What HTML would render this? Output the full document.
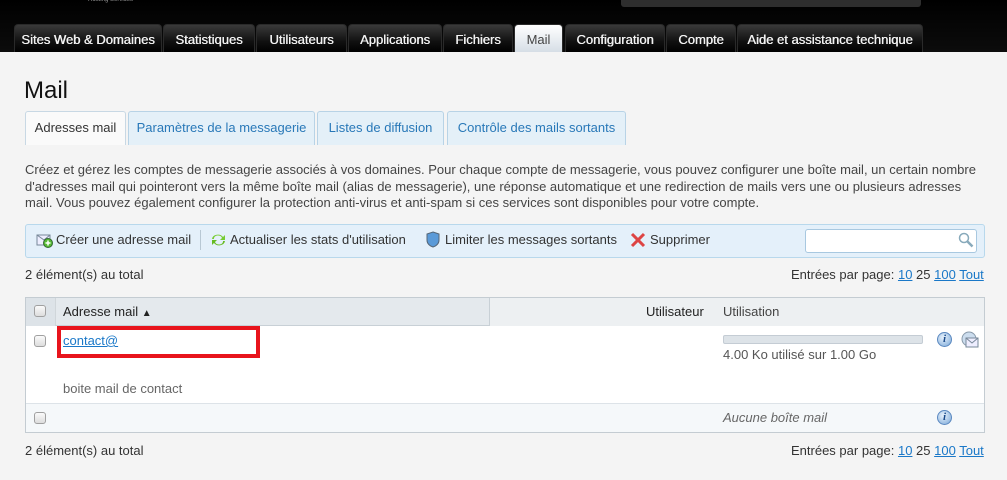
<!DOCTYPE html>
<html><head><meta charset="utf-8"><style>
*{margin:0;padding:0;box-sizing:border-box}
body{width:1007px;height:480px;background:#f4f4f4;font-family:"Liberation Sans",sans-serif;font-size:13px;color:#333;position:relative;overflow:hidden}
.a{position:absolute;white-space:nowrap}
#top{position:absolute;left:0;top:0;width:1007px;height:52px;background:linear-gradient(#000,#0c0c0c)}
.nt{position:absolute;top:24px;height:28px;background:linear-gradient(#3a3a3a,#111 60%,#000);border-radius:4px 4px 0 0;color:#f2f2f2;font-size:13px;font-weight:normal;text-shadow:0.4px 0 0 #f2f2f2;text-align:center;line-height:30px;border:1px solid #2a2a2a;border-bottom:none}
.nt.on{background:linear-gradient(#fff,#d6dee6);color:#444;text-shadow:none}
.st{position:absolute;top:111px;height:34px;background:#e4f0f8;border:1px solid #b8d3e6;border-bottom:none;border-radius:3px 3px 0 0;color:#2878b8;text-align:center;line-height:32px}
.st.on{background:#fafafa;color:#333;border-color:#c8d8e4}
a,.lk{color:#1a78c8;text-decoration:underline}
.cb{position:absolute;width:12px;height:12px;border:1px solid #a0a0a0;border-radius:3px;background:linear-gradient(#fafafa,#ddd)}
.info{position:absolute;width:15px;height:15px;border-radius:50%;background:radial-gradient(circle at 40% 35%,#e8f2fc,#7aa8d8);border:1px solid #5a88c0;color:#1a4a8a;font:italic bold 11px "Liberation Serif",serif;text-align:center;line-height:13px}
</style></head><body>
<div id="top"></div>
<div class="a" style="left:621px;top:0;width:300px;height:7px;background:#2e2e2e;border-radius:0 0 3px 3px"></div>
<div class="a" style="left:88px;top:-3px;font-size:6px;color:#999">Hosting Services</div>
<div class="nt" style="left:14px;width:148px">Sites Web &amp; Domaines</div>
<div class="nt" style="left:163px;width:92px">Statistiques</div>
<div class="nt" style="left:256px;width:91px">Utilisateurs</div>
<div class="nt" style="left:348px;width:94px">Applications</div>
<div class="nt" style="left:443px;width:70px">Fichiers</div>
<div class="nt on" style="left:514px;width:49px">Mail</div>
<div class="nt" style="left:565px;width:100px">Configuration</div>
<div class="nt" style="left:666px;width:70px">Compte</div>
<div class="nt" style="left:737px;width:186px">Aide et assistance technique</div>

<div class="a" style="left:24px;top:77px;font-size:24px;color:#111">Mail</div>
<div class="st on" style="left:25px;width:101px">Adresses mail</div>
<div class="st" style="left:128px;width:187px">Paramètres de la messagerie</div>
<div class="st" style="left:317px;width:127px">Listes de diffusion</div>
<div class="st" style="left:447px;width:179px">Contrôle des mails sortants</div>

<div class="a" style="left:25px;top:162px;line-height:16.5px;color:#444">Créez et gérez les comptes de messagerie associés à vos domaines. Pour chaque compte de messagerie, vous pouvez configurer une boîte mail, un certain nombre<br>d'adresses mail qui pointeront vers la même boîte mail (alias de messagerie), une réponse automatique et une redirection de mails vers une ou plusieurs adresses<br>mail. Vous pouvez également configurer la protection anti-virus et anti-spam si ces services sont disponibles pour votre compte.</div>

<div class="a" style="left:25px;top:224px;width:960px;height:34px;background:#e4f0fa;border:1px solid #b8d8ec;border-radius:3px"></div>
<svg class="a" style="left:36px;top:232px" width="18" height="16"><rect x="1" y="3" width="13" height="10" fill="#eef" stroke="#789"/><path d="M1 3l7 5 6-5" fill="none" stroke="#789"/><circle cx="12" cy="11" r="4.5" fill="#5b3" stroke="#363"/><path d="M12 8.5v5M9.5 11h5" stroke="#fff" stroke-width="1.5"/></svg>
<div class="a" style="left:56px;top:232px">Créer une adresse mail</div>
<div class="a" style="left:200px;top:230px;width:1px;height:20px;background:#b8c8d4"></div>
<svg class="a" style="left:210px;top:232px" width="17" height="16"><path d="M2 7a6 5 0 0 1 11-2l2-2v5h-5l2-2a4 3 0 0 0-8 1z" fill="#7c3"/><path d="M15 9a6 5 0 0 1-11 2l-2 2v-5h5l-2 2a4 3 0 0 0 8-1z" fill="#6b2"/></svg>
<div class="a" style="left:230px;top:232px">Actualiser les stats d'utilisation</div>
<svg class="a" style="left:425px;top:231px" width="16" height="17"><path d="M8 1l6 2v6c0 4-3 6-6 7-3-1-6-3-6-7V3z" fill="#5a9ad8" stroke="#567"/></svg>
<div class="a" style="left:445px;top:232px">Limiter les messages sortants</div>
<svg class="a" style="left:630px;top:232px" width="16" height="16"><path d="M2 2l12 12M14 2L2 14" stroke="#d44" stroke-width="3"/></svg>
<div class="a" style="left:650px;top:232px">Supprimer</div>
<div class="a" style="left:805px;top:229px;width:172px;height:24px;background:#fff;border:1px solid #a8c8e0;border-radius:3px"></div>
<svg class="a" style="left:958px;top:232px" width="16" height="16"><circle cx="6" cy="6" r="4.5" fill="none" stroke="#8ab" stroke-width="1.5"/><path d="M9.5 9.5l5 5" stroke="#8ab" stroke-width="2.5"/></svg>

<div class="a" style="left:25px;top:267px">2 élément(s) au total</div>
<div class="a" style="left:791px;top:267px">Entrées par page: <span class="lk">10</span> 25 <span class="lk">100</span> <span class="lk">Tout</span></div>

<div class="a" style="left:25px;top:297px;width:960px;height:136px;border:1px solid #c4ccd2;background:#fff"></div>
<div class="a" style="left:26px;top:298px;width:958px;height:28px;background:#e4e9ed;border-bottom:1px solid #c8d0d6"></div>
<div class="a" style="left:26px;top:298px;width:30px;height:28px;background:#dde3e8;border-right:1px solid #d0d6da"></div>
<div class="a" style="left:489px;top:298px;width:1px;height:28px;background:#c8d0d6"></div>
<div class="a" style="left:490px;top:298px;width:494px;height:28px;background:#edf0f2"></div>
<div class="cb" style="left:34px;top:305px"></div>
<div class="a" style="left:63px;top:304px;color:#222">Adresse mail <b style="font-size:10px">&#9650;</b></div>
<div class="a" style="left:646px;top:304px;color:#222">Utilisateur</div>
<div class="a" style="left:723px;top:304px;color:#444">Utilisation</div>
<div class="cb" style="left:34px;top:335px"></div>
<div class="a" style="left:63px;top:333px"><a>contact@</a></div>
<div class="a" style="left:57px;top:326px;width:203px;height:32px;border:4px solid #e8141c"></div>
<div class="a" style="left:723px;top:335px;width:200px;height:9px;background:#dde3e8;border:1px solid #c4ccd4;border-radius:2px"></div>
<div class="a" style="left:723px;top:347px;color:#555">4.00 Ko utilisé sur 1.00 Go</div>
<div class="info" style="left:937px;top:332px">i</div>
<svg class="a" style="left:961px;top:331px" width="18" height="18"><circle cx="8" cy="8" r="7" fill="#cde" stroke="#89a"/><rect x="5" y="7" width="12" height="9" fill="#eef" stroke="#789"/><path d="M5 7l6 5 6-5" fill="none" stroke="#789"/></svg>
<div class="a" style="left:63px;top:381px;color:#666">boite mail de contact</div>
<div class="a" style="left:26px;top:403px;width:958px;height:29px;background:#f5f8fa;border-top:1px solid #dde3e8"></div>
<div class="cb" style="left:34px;top:412px"></div>
<div class="a" style="left:723px;top:410px;color:#666;font-style:italic">Aucune boîte mail</div>
<div class="info" style="left:937px;top:410px">i</div>

<div class="a" style="left:25px;top:443px">2 élément(s) au total</div>
<div class="a" style="left:791px;top:443px">Entrées par page: <span class="lk">10</span> 25 <span class="lk">100</span> <span class="lk">Tout</span></div>
</body></html>
